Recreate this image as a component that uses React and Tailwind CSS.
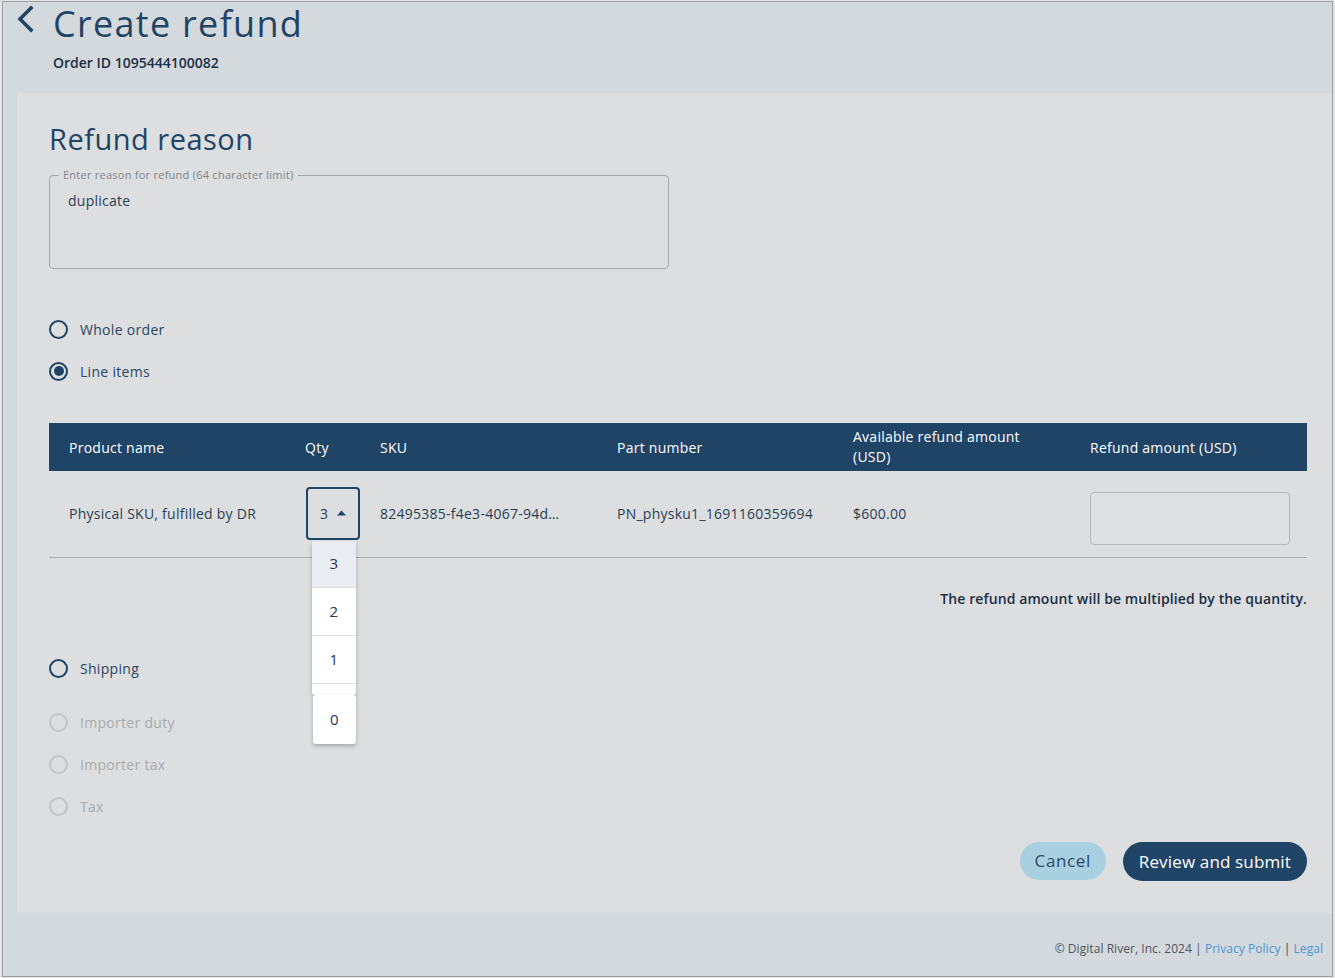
import React from "react";

const font = { fontFamily: '"Open Sans", "Noto Sans", sans-serif' };

function Radio({ checked = false, disabled = false, label }) {
  return (
    <div className="flex items-center h-[24px]">
      <span
        className={`w-[19px] h-[19px] rounded-full border-2 flex items-center justify-center ${
          disabled ? "border-[#c3c5c8]" : "border-[#1f4466]"
        }`}
      >
        {checked && <span className="w-[10px] h-[10px] rounded-full bg-[#1f4466]" />}
      </span>
      <span
        className={`ml-[12px] text-[14px] tracking-[0.3px] ${disabled ? "text-[#a9abae]" : "text-[#2a4763]"}`}
      >
        {label}
      </span>
    </div>
  );
}

export default function App() {
  return (
    <div className="w-[1335px] h-[978px] bg-[#e4e4e4] pt-[1px] pl-[2px] pr-[2px] pb-[1px] tracking-[0.25px]" style={font}>
      <div className="w-full h-full border border-[#9a9ea2] bg-[#d3d9dc] flex flex-col">
        {/* header */}
        <div className="h-[91px] shrink-0 flex">
          <div className="w-[50px] shrink-0 pl-[12px] pt-[3px]">
            <svg width="22" height="28" viewBox="0 0 22 28" fill="none">
              <path d="M16 3 L5 14 L16 25" stroke="#1f4466" strokeWidth="3.6" strokeLinecap="square" strokeLinejoin="miter" />
            </svg>
          </div>
          <div className="flex flex-col">
            <h1 className="text-[36px] leading-[44px] text-[#1f4466] font-normal tracking-[1.3px]">Create refund</h1>
            <div className="text-[14px] font-semibold text-[#1b2f45] mt-[6px] tracking-normal">Order ID 1095444100082</div>
          </div>
        </div>

        {/* card */}
        <div className="ml-[14px] h-[820px] shrink-0 bg-[#dcdee0] rounded-tl-[3px] pl-[32px] pr-[25px] pt-[27px] flex flex-col">
          <h2 className="text-[29px] leading-[38px] text-[#1f4466] font-normal tracking-[0.5px]">Refund reason</h2>
          <div className="relative mt-[17px] w-[620px] h-[94px] border border-[#a5a8ab] rounded-[4px] pl-[18px] pt-[14px]">
            <span className="absolute -top-[9px] left-[9px] px-[4px] bg-[#dcdee0] text-[11px] leading-[16px] text-[#80848a]">
              Enter reason for refund (64 character limit)
            </span>
            <div className="text-[14px] text-[#2a3f55]">duplicate</div>
          </div>

          <div className="mt-[48px] flex flex-col gap-[18px]">
            <Radio label="Whole order" />
            <Radio label="Line items" checked />
          </div>

          {/* table */}
          <div className="mt-[40px] w-full">
            <div className="h-[48px] bg-[#1f4466] grid grid-cols-[256px_75px_237px_236px_237px_1fr] items-center text-white text-[14px] font-medium">
              <div className="pl-[20px]">Product name</div>
              <div>Qty</div>
              <div>SKU</div>
              <div>Part number</div>
              <div className="leading-[20px] max-w-[185px]">Available refund amount (USD)</div>
              <div>Refund amount (USD)</div>
            </div>
            <div className="h-[87px] pb-[2px] border-b border-[#a9aeb3] grid grid-cols-[256px_75px_237px_236px_237px_1fr] items-center text-[14px] text-[#2a3f55]">
              <div className="pl-[20px]">Physical SKU, fulfilled by DR</div>
              <div className="relative">
                <div className="w-[54px] h-[53px] border-2 border-[#1f4466] rounded-[4px] flex items-center pl-[12px] gap-[9px] ml-[1px]">
                  <span>3</span>
                  <svg width="9" height="6" viewBox="0 0 9 6"><path d="M0 5.5 L4.5 0.5 L9 5.5 Z" fill="#1f4466" /></svg>
                </div>
                <div className="absolute left-[7px] top-[54px] z-10 w-[44px] flex flex-col text-[15px] text-[#1f3550]">
                  <div className="bg-white rounded-[3px] shadow-[0_2px_4px_rgba(0,0,0,0.25)] flex flex-col">
                    <div className="h-[47px] bg-[#e9ecf0] rounded-t-[3px] flex items-center justify-center border-b border-[#dcdfe2]">3</div>
                    <div className="h-[48px] flex items-center justify-center border-b border-[#dcdfe2]">2</div>
                    <div className="h-[48px] flex items-center justify-center border-b border-[#dcdfe2]">1</div>
                    <div className="h-[11px]" />
                  </div>
                  <div className="ml-[1px] bg-white h-[49px] rounded-[3px] shadow-[0_2px_4px_rgba(0,0,0,0.25)] flex items-center justify-center">0</div>
                </div>
              </div>
              <div className="truncate pr-[40px]">82495385-f4e3-4067-94d…</div>
              <div>PN_physku1_1691160359694</div>
              <div>$600.00</div>
              <div>
                <div className="w-[200px] h-[53px] border border-[#b5b8bb] rounded-[4px] bg-[#dfe0e2] mt-[10px]" />
              </div>
            </div>
          </div>

          <div className="mt-[30px] text-right text-[14px] font-semibold text-[#1b2f45] tracking-[0.1px]">
            The refund amount will be multiplied by the quantity.
          </div>

          <div className="mt-[47px]">
            <Radio label="Shipping" />
          </div>
          <div className="mt-[30px] flex flex-col gap-[18px]">
            <Radio label="Importer duty" disabled />
            <Radio label="Importer tax" disabled />
            <Radio label="Tax" disabled />
          </div>

          <div className="mt-[24px] flex justify-end gap-[17px]">
            <button className="h-[38px] px-[15px] rounded-full bg-[#a9d0e0] text-[17px] tracking-[0.6px] text-[#2d4a66]">Cancel</button>
            <button className="h-[39px] px-[16px] rounded-full bg-[#1f4466] text-[17px] tracking-[0.15px] text-white font-medium">Review and submit</button>
          </div>
        </div>

        {/* footer */}
        <div className="flex-1 flex items-center justify-end pr-[9px] pt-[8px] text-[12px] tracking-[0.05px]">
          <span className="text-[#4e5660]">© Digital River, Inc. 2024 |&nbsp;</span>
          <span className="text-[#4a98d3]">Privacy Policy</span>
          <span className="text-[#1f4466]">&nbsp;|&nbsp;</span>
          <span className="text-[#4a98d3]">Legal</span>
        </div>
      </div>
    </div>
  );
}
